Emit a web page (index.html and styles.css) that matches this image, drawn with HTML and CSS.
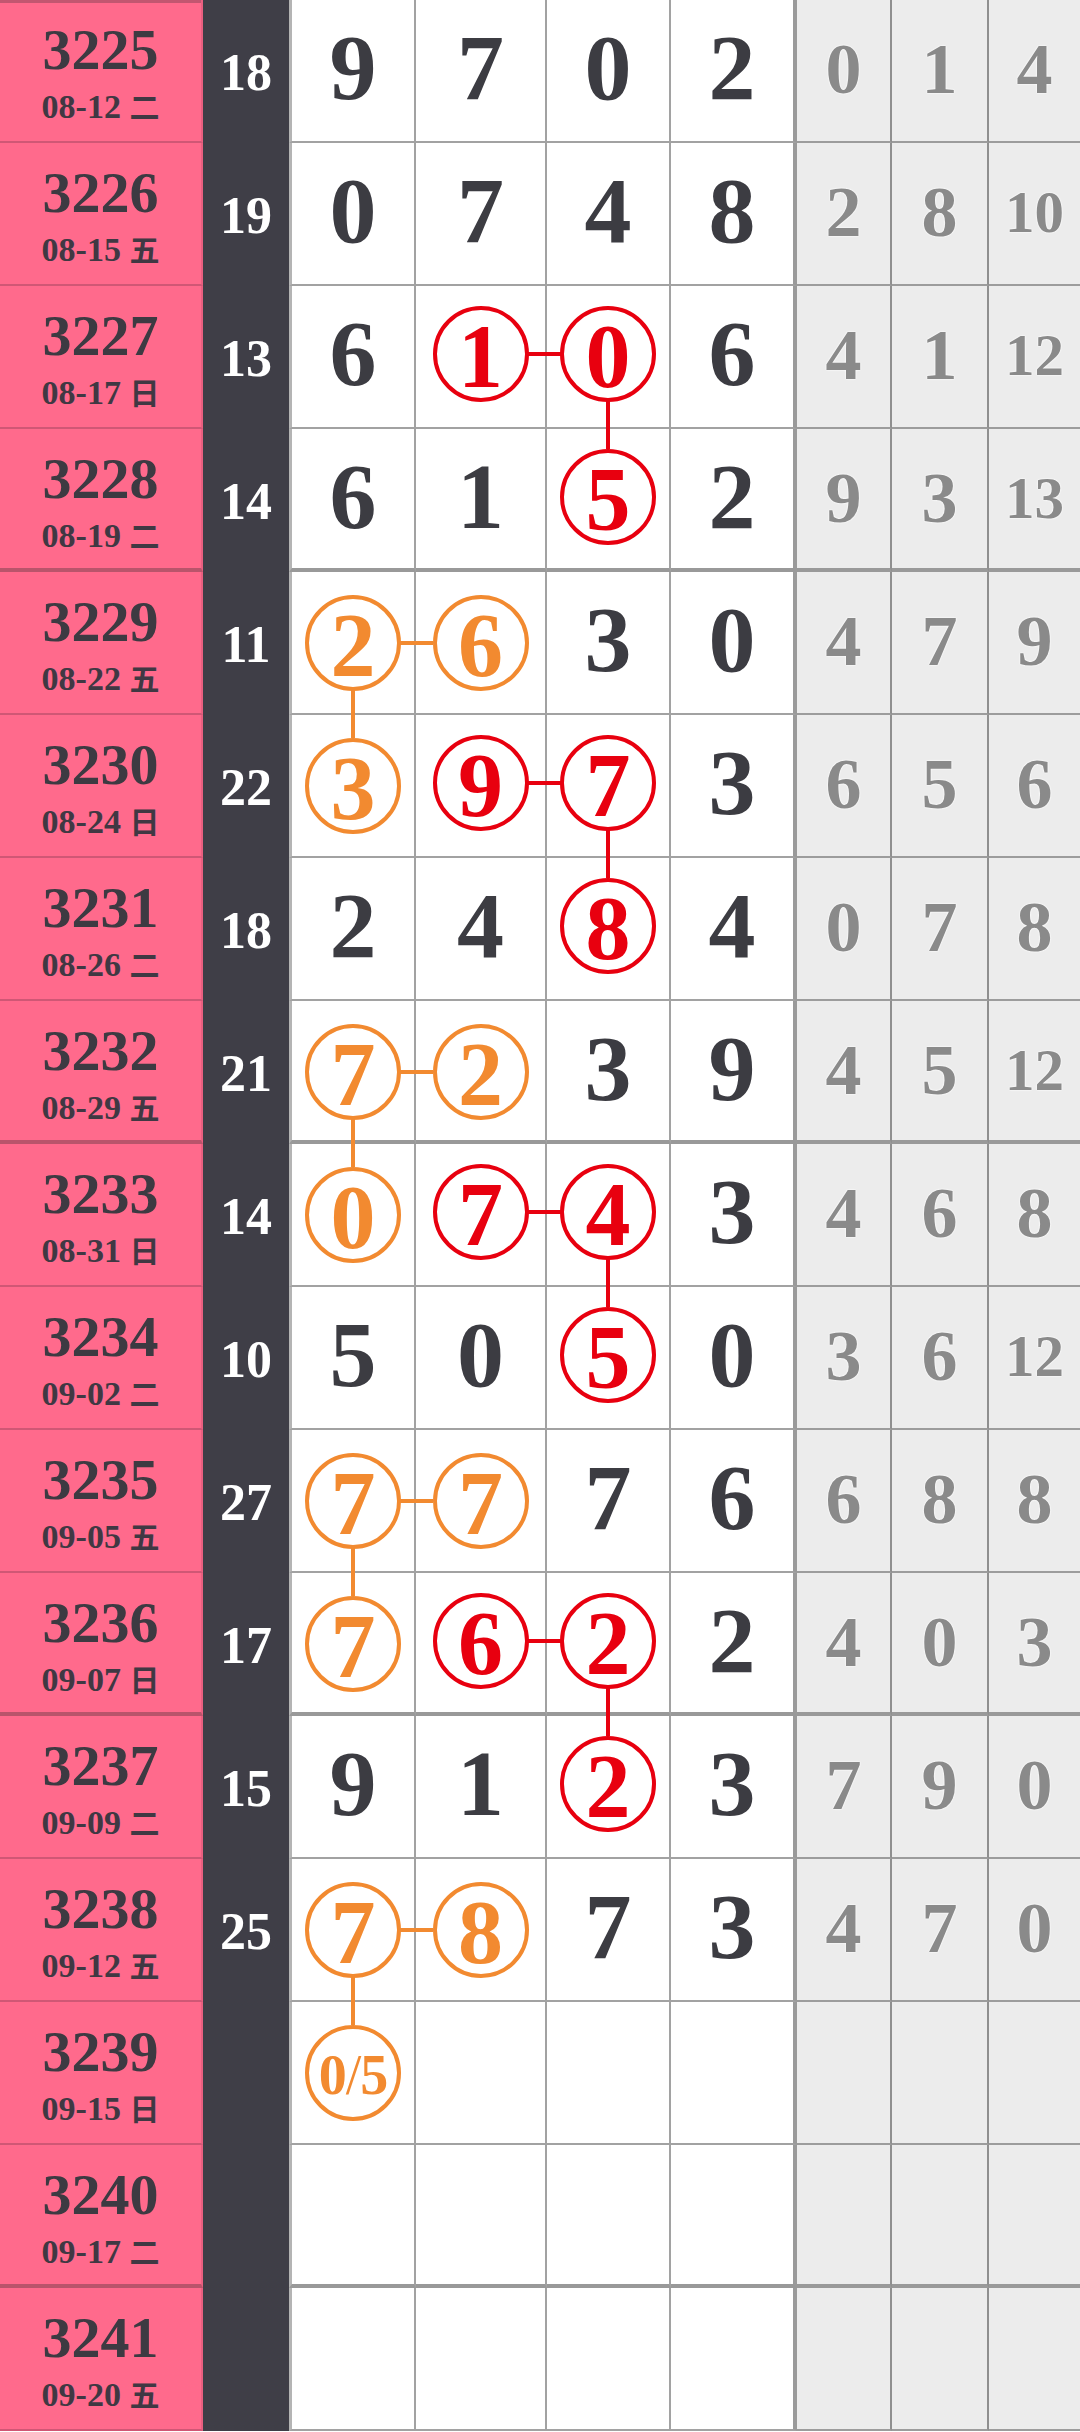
FILE: index.html
```html
<!DOCTYPE html>
<html lang="zh">
<head>
<meta charset="utf-8">
<title>走势图</title>
<link rel="stylesheet" href="styles.css">
</head>
<body>
<div class="board">
  <div class="row first">
    <div class="iss"><div class="no">3225</div><div class="dt">08-12 <span class="wd">二</span></div></div>
    <div class="sum">18</div>
    <div class="w c1"><span class="n">9</span></div>
    <div class="w"><span class="n">7</span></div>
    <div class="w"><span class="n">0</span></div>
    <div class="w c4"><span class="n">2</span></div>
    <div class="k"><span class="n">0</span></div>
    <div class="k"><span class="n">1</span></div>
    <div class="k last"><span class="n">4</span></div>
  </div>
  <div class="row">
    <div class="iss"><div class="no">3226</div><div class="dt">08-15 <span class="wd">五</span></div></div>
    <div class="sum">19</div>
    <div class="w c1"><span class="n">0</span></div>
    <div class="w"><span class="n">7</span></div>
    <div class="w"><span class="n">4</span></div>
    <div class="w c4"><span class="n">8</span></div>
    <div class="k"><span class="n">2</span></div>
    <div class="k"><span class="n">8</span></div>
    <div class="k last"><span class="n s">10</span></div>
  </div>
  <div class="row">
    <div class="iss"><div class="no">3227</div><div class="dt">08-17 <span class="wd">日</span></div></div>
    <div class="sum">13</div>
    <div class="w c1"><span class="n">6</span></div>
    <div class="w"><span class="b red rt">1</span></div>
    <div class="w"><span class="b red dn">0</span></div>
    <div class="w c4"><span class="n">6</span></div>
    <div class="k"><span class="n">4</span></div>
    <div class="k"><span class="n">1</span></div>
    <div class="k last"><span class="n s">12</span></div>
  </div>
  <div class="row g">
    <div class="iss"><div class="no">3228</div><div class="dt">08-19 <span class="wd">二</span></div></div>
    <div class="sum">14</div>
    <div class="w c1"><span class="n">6</span></div>
    <div class="w"><span class="n">1</span></div>
    <div class="w"><span class="b red">5</span></div>
    <div class="w c4"><span class="n">2</span></div>
    <div class="k"><span class="n">9</span></div>
    <div class="k"><span class="n">3</span></div>
    <div class="k last"><span class="n s">13</span></div>
  </div>
  <div class="row">
    <div class="iss"><div class="no">3229</div><div class="dt">08-22 <span class="wd">五</span></div></div>
    <div class="sum">11</div>
    <div class="w c1"><span class="b org rt dn">2</span></div>
    <div class="w"><span class="b org">6</span></div>
    <div class="w"><span class="n">3</span></div>
    <div class="w c4"><span class="n">0</span></div>
    <div class="k"><span class="n">4</span></div>
    <div class="k"><span class="n">7</span></div>
    <div class="k last"><span class="n">9</span></div>
  </div>
  <div class="row">
    <div class="iss"><div class="no">3230</div><div class="dt">08-24 <span class="wd">日</span></div></div>
    <div class="sum">22</div>
    <div class="w c1"><span class="b org">3</span></div>
    <div class="w"><span class="b red rt">9</span></div>
    <div class="w"><span class="b red dn">7</span></div>
    <div class="w c4"><span class="n">3</span></div>
    <div class="k"><span class="n">6</span></div>
    <div class="k"><span class="n">5</span></div>
    <div class="k last"><span class="n">6</span></div>
  </div>
  <div class="row">
    <div class="iss"><div class="no">3231</div><div class="dt">08-26 <span class="wd">二</span></div></div>
    <div class="sum">18</div>
    <div class="w c1"><span class="n">2</span></div>
    <div class="w"><span class="n">4</span></div>
    <div class="w"><span class="b red">8</span></div>
    <div class="w c4"><span class="n">4</span></div>
    <div class="k"><span class="n">0</span></div>
    <div class="k"><span class="n">7</span></div>
    <div class="k last"><span class="n">8</span></div>
  </div>
  <div class="row g">
    <div class="iss"><div class="no">3232</div><div class="dt">08-29 <span class="wd">五</span></div></div>
    <div class="sum">21</div>
    <div class="w c1"><span class="b org rt dn">7</span></div>
    <div class="w"><span class="b org">2</span></div>
    <div class="w"><span class="n">3</span></div>
    <div class="w c4"><span class="n">9</span></div>
    <div class="k"><span class="n">4</span></div>
    <div class="k"><span class="n">5</span></div>
    <div class="k last"><span class="n s">12</span></div>
  </div>
  <div class="row">
    <div class="iss"><div class="no">3233</div><div class="dt">08-31 <span class="wd">日</span></div></div>
    <div class="sum">14</div>
    <div class="w c1"><span class="b org">0</span></div>
    <div class="w"><span class="b red rt">7</span></div>
    <div class="w"><span class="b red dn">4</span></div>
    <div class="w c4"><span class="n">3</span></div>
    <div class="k"><span class="n">4</span></div>
    <div class="k"><span class="n">6</span></div>
    <div class="k last"><span class="n">8</span></div>
  </div>
  <div class="row">
    <div class="iss"><div class="no">3234</div><div class="dt">09-02 <span class="wd">二</span></div></div>
    <div class="sum">10</div>
    <div class="w c1"><span class="n">5</span></div>
    <div class="w"><span class="n">0</span></div>
    <div class="w"><span class="b red">5</span></div>
    <div class="w c4"><span class="n">0</span></div>
    <div class="k"><span class="n">3</span></div>
    <div class="k"><span class="n">6</span></div>
    <div class="k last"><span class="n s">12</span></div>
  </div>
  <div class="row">
    <div class="iss"><div class="no">3235</div><div class="dt">09-05 <span class="wd">五</span></div></div>
    <div class="sum">27</div>
    <div class="w c1"><span class="b org rt dn">7</span></div>
    <div class="w"><span class="b org">7</span></div>
    <div class="w"><span class="n">7</span></div>
    <div class="w c4"><span class="n">6</span></div>
    <div class="k"><span class="n">6</span></div>
    <div class="k"><span class="n">8</span></div>
    <div class="k last"><span class="n">8</span></div>
  </div>
  <div class="row g">
    <div class="iss"><div class="no">3236</div><div class="dt">09-07 <span class="wd">日</span></div></div>
    <div class="sum">17</div>
    <div class="w c1"><span class="b org">7</span></div>
    <div class="w"><span class="b red rt">6</span></div>
    <div class="w"><span class="b red dn">2</span></div>
    <div class="w c4"><span class="n">2</span></div>
    <div class="k"><span class="n">4</span></div>
    <div class="k"><span class="n">0</span></div>
    <div class="k last"><span class="n">3</span></div>
  </div>
  <div class="row">
    <div class="iss"><div class="no">3237</div><div class="dt">09-09 <span class="wd">二</span></div></div>
    <div class="sum">15</div>
    <div class="w c1"><span class="n">9</span></div>
    <div class="w"><span class="n">1</span></div>
    <div class="w"><span class="b red">2</span></div>
    <div class="w c4"><span class="n">3</span></div>
    <div class="k"><span class="n">7</span></div>
    <div class="k"><span class="n">9</span></div>
    <div class="k last"><span class="n">0</span></div>
  </div>
  <div class="row">
    <div class="iss"><div class="no">3238</div><div class="dt">09-12 <span class="wd">五</span></div></div>
    <div class="sum">25</div>
    <div class="w c1"><span class="b org rt dn">7</span></div>
    <div class="w"><span class="b org">8</span></div>
    <div class="w"><span class="n">7</span></div>
    <div class="w c4"><span class="n">3</span></div>
    <div class="k"><span class="n">4</span></div>
    <div class="k"><span class="n">7</span></div>
    <div class="k last"><span class="n">0</span></div>
  </div>
  <div class="row">
    <div class="iss"><div class="no">3239</div><div class="dt">09-15 <span class="wd">日</span></div></div>
    <div class="sum"></div>
    <div class="w c1"><span class="b org frac">0<span class="sl">/</span>5</span></div>
    <div class="w"></div>
    <div class="w"></div>
    <div class="w c4"></div>
    <div class="k"></div>
    <div class="k"></div>
    <div class="k last"></div>
  </div>
  <div class="row g">
    <div class="iss"><div class="no">3240</div><div class="dt">09-17 <span class="wd">二</span></div></div>
    <div class="sum"></div>
    <div class="w c1"></div>
    <div class="w"></div>
    <div class="w"></div>
    <div class="w c4"></div>
    <div class="k"></div>
    <div class="k"></div>
    <div class="k last"></div>
  </div>
  <div class="row">
    <div class="iss"><div class="no">3241</div><div class="dt">09-20 <span class="wd">五</span></div></div>
    <div class="sum"></div>
    <div class="w c1"></div>
    <div class="w"></div>
    <div class="w"></div>
    <div class="w c4"></div>
    <div class="k"></div>
    <div class="k"></div>
    <div class="k last"></div>
  </div>
</div>
</body>
</html>
```

FILE: styles.css
```css
* { box-sizing: border-box; margin: 0; padding: 0; }
html, body { background: #fff; }
body {
  width: 1080px;
  height: 2432px;
  overflow: hidden;
  font-family: "Liberation Serif", "Noto Sans CJK SC", serif;
  font-weight: 700;
}
.board { display: flex; flex-direction: column; }
.row {
  display: grid;
  grid-template-columns: 203px 86px 127px 131px 124px 126px 95px 97px 91px;
  height: 143px;
}

/* issue column */
.iss {
  background: #ff6a8c;
  border-right: 2px solid #e95f80;
  border-bottom: 2px solid #d05775;
  text-align: center;
  padding-top: 21px;
  color: #3d3a42;
}
.first .iss { box-shadow: inset 0 3px 0 #c25670; }
.g .iss { border-bottom: 4px solid #b9546b; }
.no { font-size: 58px; line-height: 58px; }
.dt { font-size: 34px; line-height: 34px; margin-top: 9px; color: #403843; }
.wd { font-family: "Noto Sans CJK SC", sans-serif; font-size: 30px; font-weight: 700; }

/* sum column */
.sum {
  background: #3f3e47;
  color: #fff;
  font-size: 52px;
  line-height: 52px;
  display: flex;
  align-items: center;
  justify-content: center;
  padding-top: 2px;
}

/* white number cells */
.w {
  background: #fff;
  border-right: 2px solid #a2a2a2;
  border-bottom: 2px solid #a2a2a2;
  display: flex;
  justify-content: center;
  align-items: flex-start;
  padding-top: 20px;
}
.c1 { border-left: 3px solid #b4b4b4; }
.c4 { border-right: 4px solid #9a9a9a; }
.w .n { font-size: 94px; line-height: 94px; color: #3c3c42; }

/* grey columns */
.k {
  background: #ececec;
  border-right: 2px solid #8f8f8f;
  border-bottom: 2px solid #9c9c9c;
  display: flex;
  justify-content: center;
  align-items: flex-start;
  padding-top: 33px;
}
.k.last { border-right: 0; }
.k .n {
  font-size: 72px;
  line-height: 72px;
  color: #8a8a8a;
  text-shadow: 0 0 2px #fff, 0 0 2px #fff;
}
.k .n.s { font-size: 59px; line-height: 59px; margin-top: 7px; }

.g .w, .g .k { border-bottom: 4px solid #999; }

/* balls */
.b {
  position: relative;
  width: 96px;
  height: 96px;
  border-radius: 50%;
  border: 4px solid;
  background: #fff;
  display: flex;
  align-items: center;
  justify-content: center;
  padding-top: 6px;
  font-size: 90px;
  line-height: 90px;
}
.b.red { color: #e8000f; border-color: #e8000f; }
.b.org { color: #f28a30; border-color: #f28a30; margin-top: 3px; }
.b.rt::after {
  content: "";
  position: absolute;
  left: 100%;
  top: 50%;
  width: 36px;
  height: 4px;
  margin-top: -2px;
  background: currentColor;
}
.b.dn::before {
  content: "";
  position: absolute;
  top: 100%;
  left: 50%;
  width: 4px;
  height: 51px;
  margin-left: -2px;
  background: currentColor;
}
.b.frac { font-size: 56px; line-height: 56px; letter-spacing: -1px; padding-top: 4px; }
.b.frac .sl { font-weight: 400; }
```
